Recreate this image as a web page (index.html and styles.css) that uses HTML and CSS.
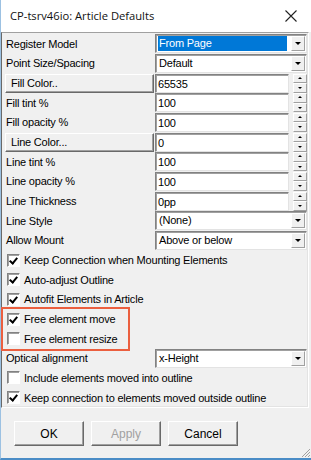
FILE: index.html
```html
<!DOCTYPE html>
<html lang="en">
<head>
    <meta charset="UTF-8">
    <title>Article Defaults</title>
    <link rel="stylesheet" href="styles.css">
</head>
<body>

<div class="window">
    <div class="titlebar">
        <span class="title">CP-tsrv46io: Article Defaults</span>
        <svg class="close" width="12" height="12" viewBox="0 0 12 12">
            <path d="M0.5 0.5 L11.5 11.5 M11.5 0.5 L0.5 11.5" stroke="#222" stroke-width="1.1" fill="none"/>
        </svg>
    </div>

    <div class="client">
        <div class="grid">
            <div class="row">
                <span class="label">Register Model</span>
                <div class="field combo"><span class="value selected">From Page</span><span class="btn drop"></span></div>
            </div>
            <div class="row">
                <span class="label">Point Size/Spacing</span>
                <div class="field combo"><span class="value">Default</span><span class="btn drop"></span></div>
            </div>
            <div class="row">
                <span class="label-btn">Fill Color..</span>
                <div class="field spin"><span class="value">65535</span><span class="btn updown"><i class="up"></i><i class="down"></i></span></div>
            </div>
            <div class="row">
                <span class="label">Fill tint %</span>
                <div class="field spin"><span class="value">100</span><span class="btn updown"><i class="up"></i><i class="down"></i></span></div>
            </div>
            <div class="row">
                <span class="label">Fill opacity %</span>
                <div class="field spin"><span class="value">100</span><span class="btn updown"><i class="up"></i><i class="down"></i></span></div>
            </div>
            <div class="row">
                <span class="label-btn">Line Color...</span>
                <div class="field spin"><span class="value">0</span><span class="btn updown"><i class="up"></i><i class="down"></i></span></div>
            </div>
            <div class="row">
                <span class="label">Line tint %</span>
                <div class="field spin"><span class="value">100</span><span class="btn updown"><i class="up"></i><i class="down"></i></span></div>
            </div>
            <div class="row">
                <span class="label">Line opacity %</span>
                <div class="field spin"><span class="value">100</span><span class="btn updown"><i class="up"></i><i class="down"></i></span></div>
            </div>
            <div class="row">
                <span class="label">Line Thickness</span>
                <div class="field spin"><span class="value">0pp</span><span class="btn updown"><i class="up"></i><i class="down"></i></span></div>
            </div>
            <div class="row">
                <span class="label">Line Style</span>
                <div class="field combo"><span class="value">(None)</span><span class="btn drop"></span></div>
            </div>
            <div class="row">
                <span class="label">Allow Mount</span>
                <div class="field combo"><span class="value">Above or below</span><span class="btn drop"></span></div>
            </div>

            <label class="row check"><span class="box on"></span>Keep Connection when Mounting Elements</label>
            <label class="row check"><span class="box on"></span>Auto-adjust Outline</label>
            <label class="row check"><span class="box on"></span>Autofit Elements in Article</label>

            <div class="marked">
                <label class="row check"><span class="box on"></span>Free element move</label>
                <label class="row check"><span class="box"></span>Free element resize</label>
            </div>

            <div class="row">
                <span class="label">Optical alignment</span>
                <div class="field combo"><span class="value">x-Height</span><span class="btn drop"></span></div>
            </div>
            <label class="row check"><span class="box"></span>Include elements moved into outline</label>
            <label class="row check"><span class="box on"></span>Keep connection to elements moved outside outline</label>
        </div>

        <div class="buttons">
            <button class="push">OK</button>
            <button class="push" disabled>Apply</button>
            <button class="push">Cancel</button>
        </div>
    </div>

    <svg class="grip" width="12" height="12" viewBox="0 0 12 12">
        <path d="M11 3 L3 11 M11 6 L6 11 M11 9 L9 11" stroke="#a0a0a0" stroke-width="1" fill="none"/>
    </svg>
</div>

</body>
</html>
```

FILE: styles.css
```css
* {
    box-sizing: border-box;
}

body {
    margin: 0;
    background: #fff;
    font-family: "Liberation Sans", Arial, sans-serif;
    font-size: 11px;
    letter-spacing: -0.2px;
    color: #000;
}

.window {
    position: relative;
    width: 311px;
    height: 460px;
    display: flex;
    flex-direction: column;
    background: #f0f0f0;
    border-left: 1px solid #9cc1e2;
    border-bottom: 2px solid #4a8cc6;
    overflow: hidden;
}

.titlebar {
    height: 32px;
    flex: none;
    display: flex;
    align-items: center;
    justify-content: space-between;
    padding: 0 14px 1px 9px;
    background: #fff;
}

.title {
    font-family: "Open Sans", "Noto Sans", sans-serif;
    font-size: 11.2px;
    letter-spacing: 0;
    color: #111;
}

.client {
    flex: 1;
    display: flex;
    flex-direction: column;
}

.grid {
    margin: 0 2px 0 0;
    padding: 1px 1px 0 3px;
    border: 1px solid;
    border-color: #a0a0a0 #fff #fff #696969;
    box-shadow: inset -1px -1px 0 #e3e3e3;
}

.row {
    height: 19.67px;
    display: flex;
    align-items: center;
}

.label {
    width: 150px;
    flex: none;
    padding-left: 1px;
    white-space: nowrap;
}

.label-btn {
    width: 149px;
    height: 19px;
    margin-right: 1px;
    flex: none;
    padding-left: 5px;
    line-height: 17px;
    white-space: nowrap;
    background: #f0f0f0;
    border: 1px solid;
    border-color: #fff #696969 #696969 #fff;
    box-shadow: inset -1px -1px 0 #a0a0a0;
}

.field {
    flex: 1;
    height: 19px;
    display: flex;
    align-items: center;
    padding: 1px 1px 1px 2px;
    background: #fff;
    border: 1px solid;
    border-color: #828282 #e3e3e3 #e3e3e3 #828282;
    box-shadow: inset 1px 1px 0 #a0a0a0;
}

.field.spin {
    background: transparent;
    border: none;
    box-shadow: none;
    padding: 0;
}

.spin .value {
    flex: 1;
    height: 19px;
    padding: 2px 0 0 2px;
    background: #fff;
    border: 1px solid;
    border-color: #828282 #e3e3e3 #e3e3e3 #828282;
    box-shadow: inset 1px 1px 0 #a0a0a0;
}

.value {
    flex: 1;
    white-space: nowrap;
    line-height: 15px;
}

.combo .value {
    padding-left: 1px;
}

.value.selected {
    background: #0078d7;
    color: #fff;
    margin-right: 4px;
}

.btn {
    flex: none;
    width: 14px;
    background: #f0f0f0;
}

.drop {
    height: 15px;
    position: relative;
    border: 1px solid;
    border-color: #fff #a0a0a0 #a0a0a0 #fff;
}

.drop::after {
    content: "";
    position: absolute;
    left: 3px;
    top: 5px;
    border-left: 3px solid transparent;
    border-right: 3px solid transparent;
    border-top: 3px solid #000;
}

.updown {
    height: 19px;
    margin-left: 4px;
    display: flex;
    flex-direction: column;
}

.updown i {
    flex: 1;
    position: relative;
    border: 1px solid;
    border-color: #fff #a0a0a0 #a0a0a0 #fff;
}

.updown i::after {
    content: "";
    position: absolute;
    left: 4px;
    top: 2px;
    border-left: 2px solid transparent;
    border-right: 2px solid transparent;
}

.updown .up::after {
    border-bottom: 2px solid #000;
}

.updown .down::after {
    top: 3px;
    border-top: 2px solid #000;
}

.check {
    padding-left: 2px;
    white-space: nowrap;
}

.box {
    width: 13px;
    height: 13px;
    margin-right: 4px;
    flex: none;
    position: relative;
    background: #fff;
    border: 1px solid;
    border-color: #828282 #fff #fff #828282;
    box-shadow: inset 1px 1px 0 #a0a0a0;
}

.box.on::after {
    content: "";
    position: absolute;
    left: 3px;
    top: 1px;
    width: 3px;
    height: 6px;
    border: solid #000;
    border-width: 0 2px 2px 0;
    transform: rotate(40deg);
}

.marked {
    width: 125px;
    margin-left: -2px;
    padding-left: 2px;
    outline: 2px solid #eb5f3f;
}

.buttons {
    display: flex;
    gap: 7px;
    padding: 13px 0 0 13px;
}

.push {
    width: 70px;
    height: 25px;
    font: inherit;
    font-size: 12px;
    letter-spacing: 0;
    color: #000;
    background: #f0f0f0;
    border: 1px solid;
    border-color: #fff #696969 #696969 #fff;
    box-shadow: inset -1px -1px 0 #a0a0a0;
}

.push:disabled {
    color: #a0a0a0;
}

.grip {
    position: absolute;
    right: 0;
    bottom: 0;
}
```
